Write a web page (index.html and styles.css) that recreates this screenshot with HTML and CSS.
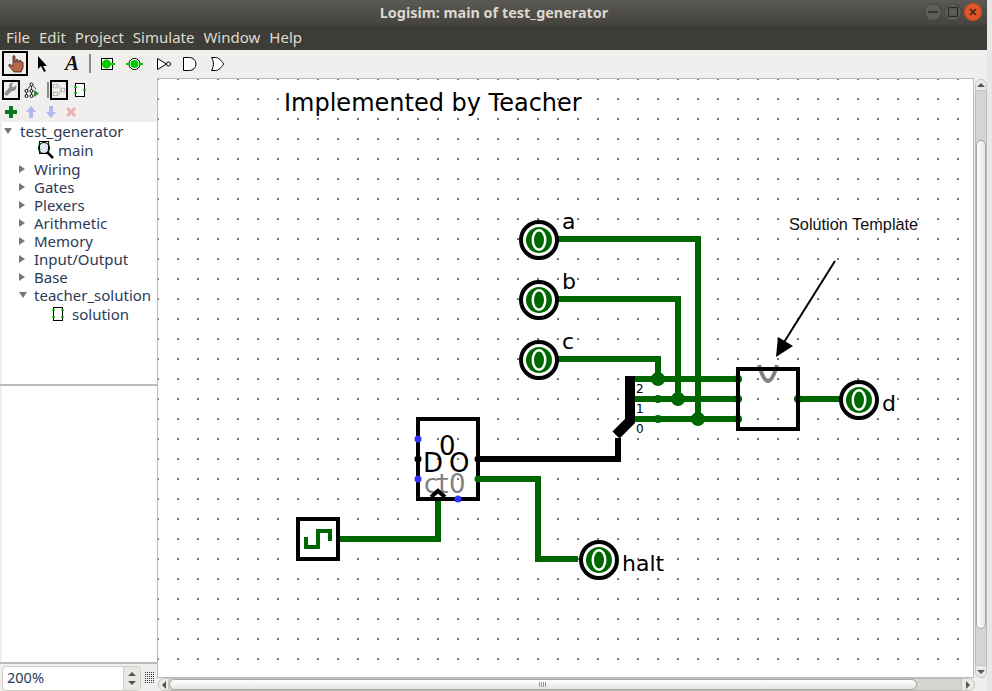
FILE: index.html
```html
<!DOCTYPE html>
<html lang="en">
<head>
<meta charset="utf-8">
<title>Logisim: main of test_generator</title>
<link rel="stylesheet" href="styles.css">
</head>
<body>
<div class="desk">
<div class="window">
  <header class="titlebar">
    <span class="title">Logisim: main of test_generator</span>
    <div class="winbtns">
      <span class="wbtn"><svg width="18" height="18" viewBox="0 0 18 18"><path d="M4 9h10" stroke="#2c2b28" stroke-width="1.5"/></svg></span>
      <span class="wbtn"><svg width="18" height="18" viewBox="0 0 18 18"><rect x="4.5" y="4.5" width="9" height="9" fill="none" stroke="#2c2b28" stroke-width="1.3"/></svg></span>
      <span class="wbtn close"><svg width="18" height="18" viewBox="0 0 18 18"><path d="M6 6l6 6M12 6l-6 6" stroke="#3a2015" stroke-width="1.5"/></svg></span>
    </div>
  </header>
  <nav class="menubar">
    <span>File</span><span>Edit</span><span>Project</span><span>Simulate</span><span>Window</span><span>Help</span>
  </nav>
  <div class="toolbar">
    <span class="tool selected big"><svg width="21" height="21" viewBox="0 0 21 21"><path d="M8 3c1-1 2 0 2 1v5l1 0V7c1-1 2-1 2 0v2h1V8c1-1 2-1 2 0v1h1c1 0 1 1 1 1v5l-2 4H9l-5-6c-1-2 1-2 2-1l2 1z" fill="#b5684a" stroke="#33201a" stroke-width=".8"/></svg></span>
    <span class="tool t-arrow"><svg width="14" height="16" viewBox="0 0 14 16"><path d="M2 0v13l3-3 3 6 2-1-3-5h4z" fill="#000"/></svg></span>
    <span class="tool letter">A</span>
    <span class="sep"></span>
    <span class="tool"><svg width="18" height="16" viewBox="0 0 18 16"><rect x="3.500" y="2.500" width="11" height="11" fill="#fff" stroke="#000"/><circle cx="8.500" cy="8" r="4.500" fill="#0c0"/><path d="M12 8h5" stroke="#0c0" stroke-width="2"/></svg></span>
    <span class="tool"><svg width="18" height="16" viewBox="0 0 18 16"><circle cx="8.500" cy="8" r="5.600" fill="#fff" stroke="#000"/><circle cx="8.500" cy="8" r="4" fill="#0c0"/><path d="M0 8h3M14 8h3" stroke="#0c0" stroke-width="2"/></svg></span>
    <span class="tool"><svg width="18" height="16" viewBox="0 0 18 16"><path d="M3.500 2.500v11l9-5.500z" fill="#fff" stroke="#000"/><circle cx="14.500" cy="8" r="2" fill="#fff" stroke="#000"/></svg></span>
    <span class="tool"><svg width="18" height="16" viewBox="0 0 18 16"><path d="M1.500 1.500h6a6.500 6.500 0 0 1 0 13h-6z" fill="#fff" stroke="#000"/></svg></span>
    <span class="tool"><svg width="18" height="16" viewBox="0 0 18 16"><path d="M1.500 1.500h4c3 0 6 3 8 6.500-2 3.500-5 6.500-8 6.500h-4c2-3 3-9 0-13z" fill="#fff" stroke="#000"/></svg></span>
  </div>
  <main class="main">
    <aside class="side">
      <div class="subtools">
        <span class="subtool selected"><svg width="16" height="16" viewBox="0 0 16 16"><path d="M14 2l-3 3-2-1 0-2 2-2c-3-1-6 1-5 5L1 11c-1 2 1 4 3 3l5-5c4 1 6-3 5-7z" fill="#8f8f8f"/></svg></span>
        <span class="subtool"><svg width="16" height="16" viewBox="0 0 16 16"><g fill="#fff" stroke="#000"><circle cx="7.500" cy="2.500" r="1.500"/><circle cx="2.500" cy="9" r="1.500"/><circle cx="7.500" cy="9" r="1.500"/><circle cx="2.500" cy="14" r="1.500"/><circle cx="7.500" cy="14" r="1.500"/></g><path d="M6.500 3.500 3 8M8.500 3.500 12 7M7.500 4v4M2.500 10.500v2M7.500 10.500v2" stroke="#000" stroke-width=".7"/><path d="M10 8v7l5-3.500z" fill="#2a8a3a"/></svg></span>
        <span class="sep small"></span>
        <span class="subtool selected"><svg width="16" height="16" viewBox="0 0 16 16"><g fill="none" stroke="#aaa"><rect x="1.500" y="1.500" width="5" height="4"/><rect x="1.500" y="10.500" width="5" height="4"/><rect x="10.500" y="6" width="4" height="4"/></g><path d="M6.500 3.500H9V8h1.500M6.500 12.500H9V8" fill="none" stroke="#a8d8a8"/></svg></span>
        <span class="subtool"><svg width="14" height="16" viewBox="0 0 14 16"><rect x="2.500" y="1.500" width="9" height="13" fill="#fff" stroke="#000"/><path d="M1 5h3M1 11h3M10 8h3" stroke="#0c0" stroke-width="1.500"/></svg></span>
      </div>
      <div class="addtools">
        <svg width="14" height="14" viewBox="0 0 14 14"><path d="M5 1h4v4h4v4H9v4H5V9H1V5h4z" fill="#0b7a1a"/></svg>
        <svg width="14" height="14" viewBox="0 0 14 14"><path d="M7 1l5 6H9v6H5V7H2z" fill="#b3b8ec"/></svg>
        <svg width="14" height="14" viewBox="0 0 14 14"><path d="M7 13l5-6H9V1H5v6H2z" fill="#b3b8ec"/></svg>
        <svg width="14" height="14" viewBox="0 0 14 14"><path d="M2 4l2-2 3 3 3-3 2 2-3 3 3 3-2 2-3-3-3 3-2-2 3-3z" fill="#eab0b0"/></svg>
      </div>
      <ul class="tree">
        <li class="row l0"><span class="arrow open"></span>test_generator</li>
        <li class="row l2 r-main"><svg class="ico" width="20" height="20" viewBox="0 0 20 20"><rect x="2.500" y="1.500" width="9" height="12" fill="#e4e8f6" stroke="#000"/><path d="M1 4h3M1 10h3M10 4h3M10 10h3" stroke="#0c0" stroke-width="1.200"/><path d="M10 12l6 6" stroke="#000" stroke-width="2.500"/><circle cx="7" cy="8" r="5.500" fill="none" stroke="#000" stroke-width="1"/></svg>main</li>
        <li class="row l1"><span class="arrow"></span>Wiring</li>
        <li class="row l1"><span class="arrow"></span>Gates</li>
        <li class="row l1"><span class="arrow"></span>Plexers</li>
        <li class="row l1"><span class="arrow"></span>Arithmetic</li>
        <li class="row l1"><span class="arrow"></span>Memory</li>
        <li class="row l1"><span class="arrow"></span>Input/Output</li>
        <li class="row l1"><span class="arrow"></span>Base</li>
        <li class="row l1"><span class="arrow open"></span>teacher_solution</li>
        <li class="row l3 r-sol"><svg class="ico" width="14" height="18" viewBox="0 0 14 18"><rect x="2.500" y="2.500" width="9" height="13" fill="#fff" stroke="#000"/><path d="M1 5h3M1 12h3M10 5h3M10 12h3" stroke="#0c0" stroke-width="1.500"/></svg>solution</li>
      </ul>
      <div class="divider"></div>
      <div class="attrs"></div>
      <div class="zoomrow">
        <div class="spinner">
          <span class="zoomval">200%</span>
          <span class="spin"><i class="tri up"></i><i class="tri down"></i></span>
        </div>
        <span class="griddots"></span>
      </div>
    </aside>
    <section class="center">
      <div class="canvas">
        <svg class="circuit" width="815" height="598" viewBox="158 79 815 598">
          <defs>
            <pattern id="dots" x="17" y="18" width="20" height="20" patternUnits="userSpaceOnUse"><rect width="2" height="2" fill="#777"/></pattern>
            <g id="pin">
              <circle r="18" fill="#fff" stroke="#000" stroke-width="4"/>
              <circle r="13" fill="#060"/>
              <ellipse rx="7.500" ry="11" fill="#fff"/>
              <ellipse rx="5" ry="8.500" fill="#060"/>
            </g>
          </defs>
          <rect x="158" y="79" width="815" height="598" fill="#fff"/>
          <rect x="158" y="79" width="815" height="598" fill="url(#dots)"/>

          <text class="label big" x="284" y="111">Implemented by Teacher</text>
          <text class="note" x="789" y="230">Solution Template</text>
          <path d="M835 261 781 347" stroke="#000" stroke-width="2"/>
          <path d="M776 357 778 337 793 346z" fill="#000"/>

          <g fill="none">
            <path d="M478 459H618V438" stroke="#000" stroke-width="6"/>
            <path d="M630 376V421L616 435" stroke="#000" stroke-width="10"/>
          </g>
          <g fill="none" stroke="#060" stroke-width="6">
            <path d="M558 239H698V419"/>
            <path d="M558 299H678V399"/>
            <path d="M558 359H658V379"/>
            <path d="M635 379H738M635 399H738M635 419H738"/>
            <path d="M798 399H858"/>
            <path d="M478 479H538V559H578"/>
            <path d="M338 539H438V499"/>
          </g>
          <g fill="#060">
            <circle cx="658" cy="379" r="7"/>
            <circle cx="678" cy="399" r="7"/>
            <circle cx="698" cy="419" r="7"/>
            <circle cx="658" cy="399" r="4"/>
            <circle cx="658" cy="419" r="4"/>
            <circle cx="738" cy="379" r="4"/>
            <circle cx="738" cy="399" r="4"/>
            <circle cx="738" cy="419" r="4"/>
            <circle cx="798" cy="399" r="4"/>
            <circle cx="858" cy="399" r="4"/>
            <rect x="336" y="536" width="6" height="6"/>
          </g>
          <text class="tiny" x="636" y="393">2</text>
          <text class="tiny" x="636" y="413">1</text>
          <text class="tiny" x="636" y="433">0</text>

          <path d="M759 365Q768 397 777 365" fill="none" stroke="#808080" stroke-width="4"/>
          <rect x="738" y="369" width="60" height="60" fill="none" stroke="#000" stroke-width="4"/>

          <use href="#pin" x="539" y="240"/>
          <use href="#pin" x="539" y="300"/>
          <use href="#pin" x="539" y="360"/>
          <use href="#pin" x="859" y="400"/>
          <use href="#pin" x="599" y="560"/>
          <text class="label pinlabel" x="562" y="229">a</text>
          <text class="label pinlabel" x="562" y="289">b</text>
          <text class="label pinlabel" x="562" y="349">c</text>
          <text class="label pinlabel" x="882" y="411">d</text>
          <text class="label pinlabel" x="622" y="571">halt</text>

          <rect x="418" y="419" width="60" height="80" fill="none" stroke="#000" stroke-width="4"/>
          <text class="label ff" x="439" y="455">0</text>
          <text class="label ff" x="423" y="472">D</text>
          <text class="label ff" x="449" y="472">O</text>
          <text class="label ff grey" x="424" y="493">ct</text>
          <text class="label ff grey" x="449" y="493">0</text>
          <path d="M431 497 438 491 445 497" fill="#fff" stroke="#000" stroke-width="4"/>
          <circle cx="418" cy="439" r="3.500" fill="#33f"/>
          <circle cx="418" cy="479" r="3.500" fill="#33f"/>
          <circle cx="458" cy="499" r="3.500" fill="#33f"/>
          <circle cx="418" cy="459" r="3.500" fill="#000"/>
          <circle cx="478" cy="459" r="3.500" fill="#000"/>
          <circle cx="478" cy="479" r="3.500" fill="#060"/>

          <rect x="298" y="519" width="40" height="40" fill="none" stroke="#000" stroke-width="4"/>
          <path d="M306 537V547H318V531H330V541" fill="none" stroke="#060" stroke-width="4"/>
        </svg>
      </div>
      <div class="hbar">
        <span class="hbtn left"><i class="tri lft"></i></span>
        <div class="htrack"><span class="hthumb"><span class="grip"></span></span></div>
        <span class="hbtn right"><i class="tri rgt"></i></span>
      </div>
    </section>
    <div class="vbar">
      <span class="vbtn top"><i class="tri up"></i></span>
      <div class="vtrack"><span class="vthumb"></span></div>
      <span class="vbtn bot"><i class="tri down"></i></span>
    </div>
  </main>
</div>
<div class="strip"></div>
</div>
</body>
</html>
```
FILE: styles.css
```css
* { box-sizing: border-box; }
html, body { margin: 0; padding: 0; height: 100%; overflow: hidden; }
body { font-family: "Noto Sans", "Open Sans", sans-serif; background: #e9e9e9; }
.desk { display: flex; width: 992px; height: 691px; }
.strip { width: 5px; background: #e6e7e8; }
.window { width: 987px; height: 691px; display: flex; flex-direction: column; background: #f0efed; }

.titlebar { height: 25px; flex: none; display: flex; align-items: center; justify-content: center; position: relative;
  background: linear-gradient(#5b5953, #45433e); }
.title { font-size: 14.400px; font-weight: 700; color: #dcd8cf; margin-left: 1px; }
.winbtns { position: absolute; right: 5px; top: 3px; display: flex; gap: 2px; }
.wbtn { width: 18px; height: 18px; border-radius: 50%; background: #5f5d58; box-shadow: inset 0 0 0 1px #44423e; display: block; }
.wbtn svg { display: block; }
.wbtn.close { background: #e2552a; box-shadow: inset 0 0 0 1px #b9451f; }

.menubar { height: 25px; flex: none; display: flex; align-items: center; gap: 9px; padding: 0 0 2px 6px;
  background: #3e3c37; color: #dfdbcf; font-size: 15px; }

.toolbar { height: 29px; flex: none; display: flex; align-items: center; padding: 0 0 2px 2px; }
.tool { width: 28px; height: 25px; display: flex; align-items: center; justify-content: center; }
.tool.big { width: 26px; border: 2px solid #000; margin-right: 2px; }
.t-arrow { width: 25px; }
.tool.letter { width: 34px; font-family: "Liberation Serif", serif; font-weight: 700; font-style: italic; font-size: 21px; color: #111; }
.sep { width: 2px; height: 19px; background: #8a8a88; margin: 0 2px 0 0; flex: none; }
.sep.small { height: 16px; margin: 0 -2px 0 3px; }

.main { flex: 1; min-height: 0; display: flex; }
.side { width: 158px; flex: none; display: flex; flex-direction: column; }
.subtools { height: 22px; flex: none; display: flex; align-items: center; gap: 3px; padding-left: 2px; }
.subtool { width: 18px; height: 20px; display: flex; align-items: center; justify-content: center; }
.subtool.selected { border: 2px solid #000; }
.addtools { height: 21px; flex: none; display: flex; align-items: center; gap: 6px; padding-left: 4px; }
.tree { list-style: none; margin: 0 0 0 2px; padding: 0; height: 262px; flex: none; background: #fff;
  border-right: 1px solid #cfcdc9; }
.row { height: 18px; display: flex; align-items: center; font-size: 15px; color: #2c3a55; white-space: nowrap; position: relative; }
.l0 { padding-left: 18px; }
.l1 { padding-left: 32px; }
.l2 { padding-left: 56px; height: 20px; }
.l3 { padding-left: 70px; height: 19px; }
.arrow { position: absolute; top: 5px; width: 0; height: 0; border-left: 6px solid #777; border-top: 4px solid transparent; border-bottom: 4px solid transparent; }
.l1 .arrow { left: 17px; }
.l0 .arrow { left: 2px; }
.arrow.open { border-top: 6px solid #777; border-left: 4px solid transparent; border-right: 4px solid transparent; border-bottom: 0; top: 6px; }
.ico { position: absolute; }
.r-main .ico { left: 35px; top: 0; }
.r-sol .ico { left: 49px; top: 1px; }
.divider { height: 2px; flex: none; background: #bdbbb7; }
.attrs { flex: 1; background: #fff; margin-left: 2px; border-right: 1px solid #cfcdc9; }
.zoomrow { height: 29px; flex: none; border-top: 2px solid #bdbbb7; display: flex; align-items: center; padding: 1px 0 0 2px; gap: 3px; }
.spinner { width: 139px; height: 25px; display: flex; background: #fff; border: 1px solid #cfcdc9; border-radius: 4px; }
.zoomval { flex: 1; font-size: 14.500px; color: #2c3a55; padding-left: 4px; line-height: 21px; }
.spin { width: 17px; background: #e8e7e4; border-left: 1px solid #cfcdc9; display: flex; flex-direction: column; align-items: center; justify-content: center; gap: 5px; border-radius: 0 4px 4px 0; }
.griddots { width: 10px; height: 12px; background-image: conic-gradient(#333 25%, transparent 0); background-size: 2px 2px; }

.tri { display: block; width: 0; height: 0; }
.tri.up { border-left: 4px solid transparent; border-right: 4px solid transparent; border-bottom: 4px solid #555; }
.tri.down { border-left: 4px solid transparent; border-right: 4px solid transparent; border-top: 4px solid #555; }
.tri.lft { border-top: 4px solid transparent; border-bottom: 4px solid transparent; border-right: 4px solid #555; }
.tri.rgt { border-top: 4px solid transparent; border-bottom: 4px solid transparent; border-left: 4px solid #555; }

.center { width: 817px; flex: none; display: flex; flex-direction: column; }
.canvas { width: 815px; height: 598px; flex: none; background: #fff; box-shadow: 0 0 0 1px #bdbbb7; }
.circuit { display: block; }
.hbar { height: 13px; margin-top: 1px; width: 817px; display: flex; background: #f0efed; }
.hbtn { width: 11px; display: flex; align-items: center; justify-content: center; background: #eceae7; border: 1px solid #c8c6c2; }
.hbtn.left { border-radius: 6px 0 0 6px; }
.hbtn.right { width: 14px; border-radius: 0 6px 6px 0; }
.htrack { flex: 1; background: #d5d4d0; display: flex; border-top: 1px solid #bdbbb7; border-bottom: 1px solid #bdbbb7; }
.hthumb { width: 748px; background: linear-gradient(#fff, #e6e5e2); border: 1px solid #a8a6a2; border-radius: 6px; display: flex; align-items: center; justify-content: center; }
.grip { width: 8px; height: 5px; background-image: repeating-linear-gradient(90deg, #999 0 1px, transparent 1px 2px); }
.vbar { width: 12px; flex: none; height: 599px; display: flex; flex-direction: column; background: #f0efed; }
.vbtn { height: 12px; flex: none; display: flex; align-items: center; justify-content: center; background: #eceae7; border: 1px solid #c8c6c2; }
.vbtn.top { border-radius: 6px 6px 0 0; }
.vbtn.bot { height: 13px; border-radius: 0 0 6px 6px; }
.vtrack { flex: 1; background: #d5d4d0; border-left: 1px solid #bdbbb7; border-right: 1px solid #bdbbb7; padding-top: 49px; display: flex; flex-direction: column; }
.vthumb { height: 489px; background: linear-gradient(90deg, #fff, #e6e5e2); border: 1px solid #a8a6a2; border-radius: 6px; display: block; }

.label { font-family: "DejaVu Sans", sans-serif; font-size: 24px; fill: #000; }
.label.pinlabel { font-size: 22px; }
.label.ff { font-size: 26px; }
.label.grey { fill: #808080; }
.tiny { font-family: "DejaVu Sans", sans-serif; font-size: 12px; fill: #000; }
.note { font-family: "Liberation Sans", sans-serif; font-size: 16.300px; fill: #111; }
```
